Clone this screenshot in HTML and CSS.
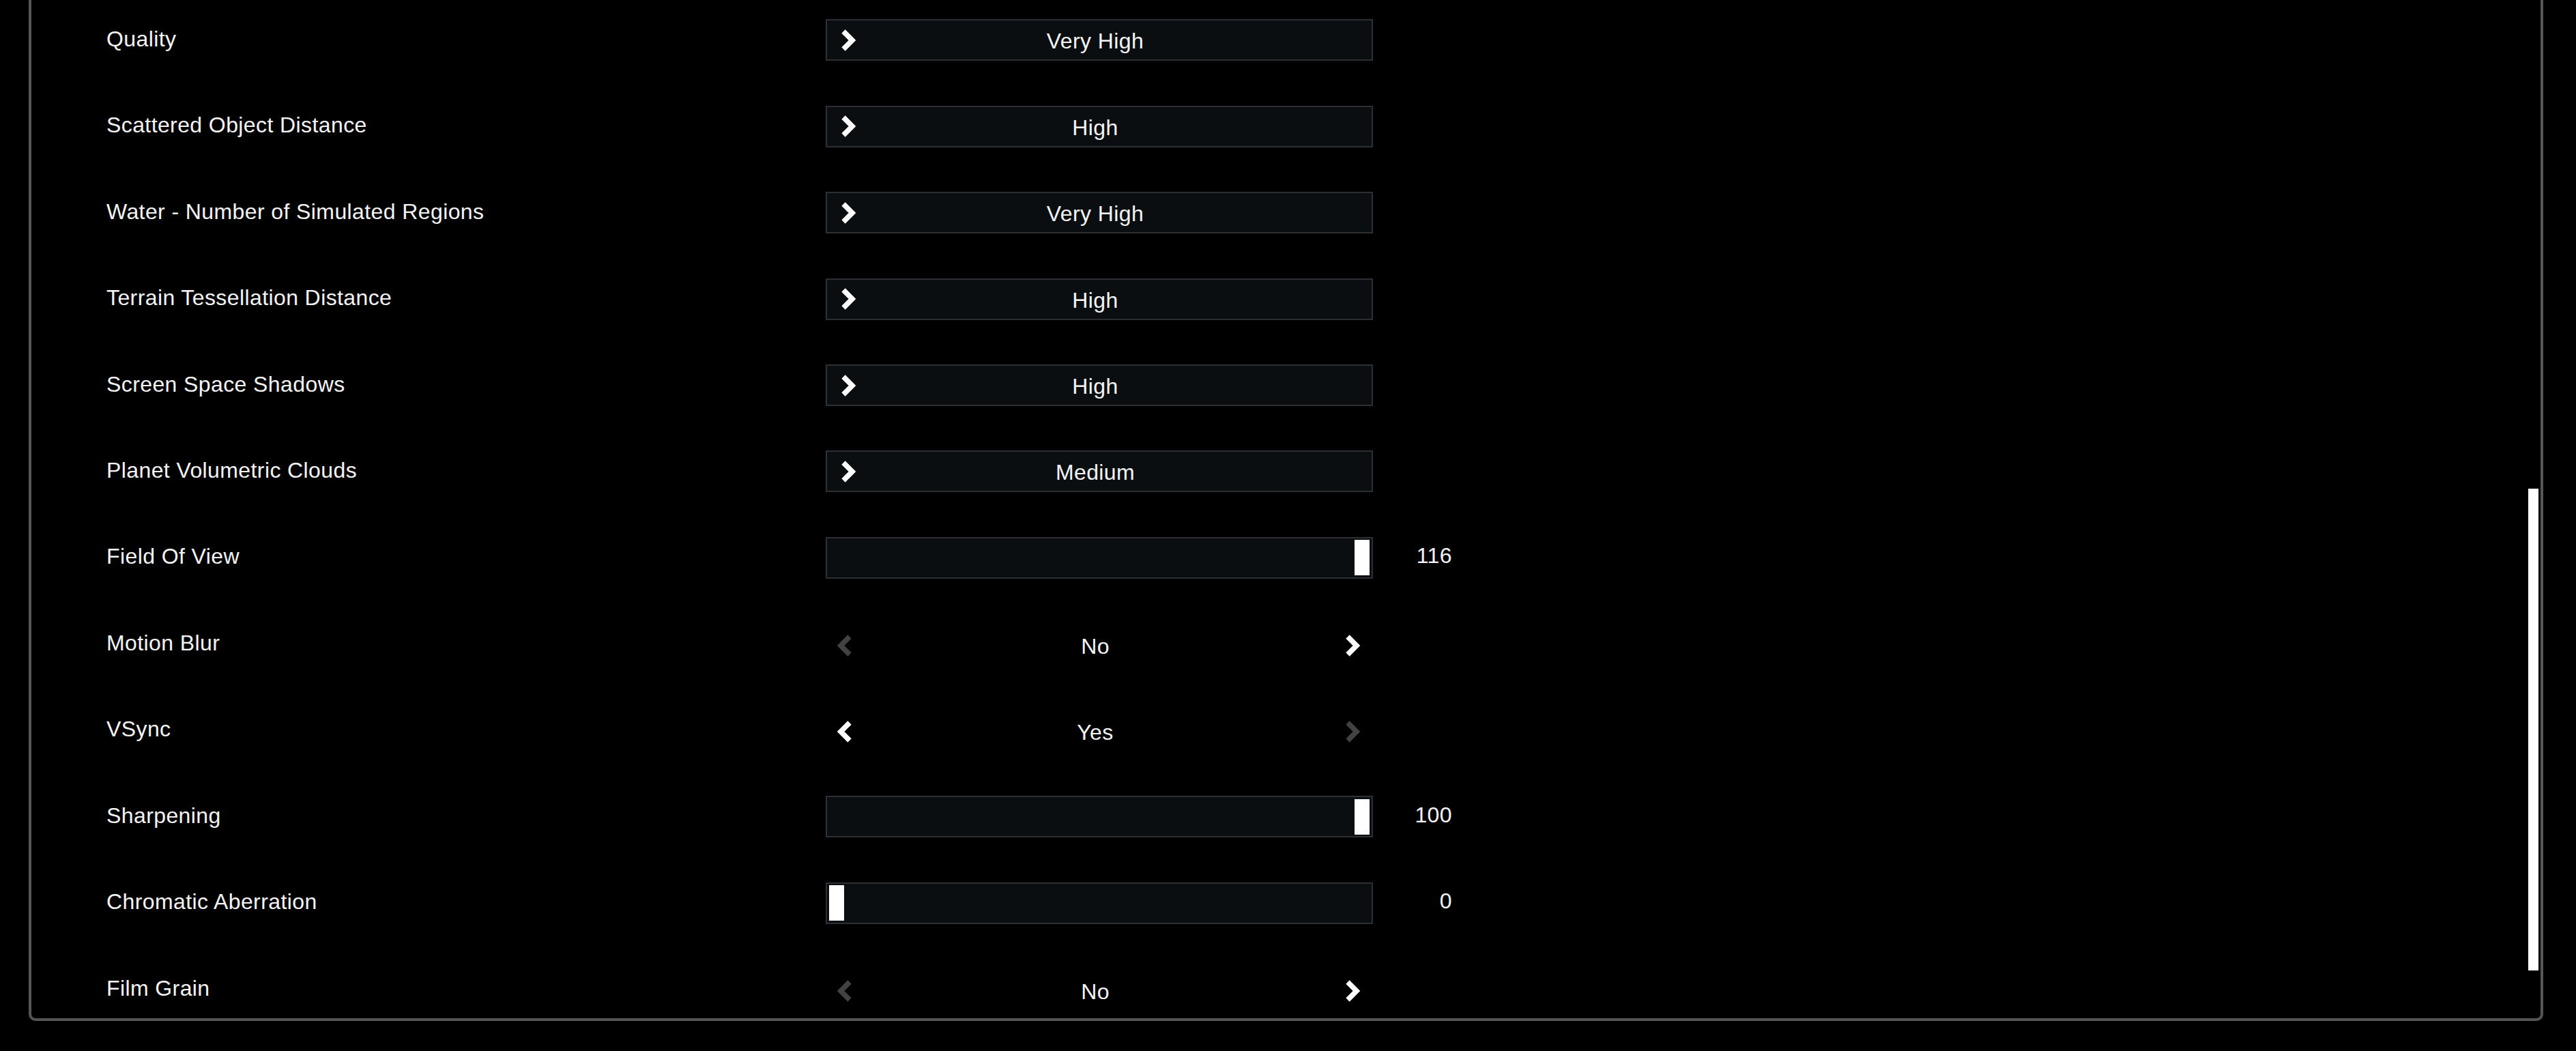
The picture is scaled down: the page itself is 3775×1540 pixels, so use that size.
FILE: index.html
```html
<!DOCTYPE html>
<html lang="en">
<head>
<meta charset="utf-8">
<title>Graphics Settings</title>
<link rel="stylesheet" href="styles.css">
</head>
<body>
<div class="panel">
  <div class="list">
    <div class="row">
      <div class="label">Quality</div>
      <div class="select"><svg class="chev" viewBox="0 0 24 34"><polyline points="5,4 18,17 5,30"/></svg><span class="sel-value">Very High</span></div>
    </div>
    <div class="row">
      <div class="label">Scattered Object Distance</div>
      <div class="select"><svg class="chev" viewBox="0 0 24 34"><polyline points="5,4 18,17 5,30"/></svg><span class="sel-value">High</span></div>
    </div>
    <div class="row">
      <div class="label">Water - Number of Simulated Regions</div>
      <div class="select"><svg class="chev" viewBox="0 0 24 34"><polyline points="5,4 18,17 5,30"/></svg><span class="sel-value">Very High</span></div>
    </div>
    <div class="row">
      <div class="label">Terrain Tessellation Distance</div>
      <div class="select"><svg class="chev" viewBox="0 0 24 34"><polyline points="5,4 18,17 5,30"/></svg><span class="sel-value">High</span></div>
    </div>
    <div class="row">
      <div class="label">Screen Space Shadows</div>
      <div class="select"><svg class="chev" viewBox="0 0 24 34"><polyline points="5,4 18,17 5,30"/></svg><span class="sel-value">High</span></div>
    </div>
    <div class="row">
      <div class="label">Planet Volumetric Clouds</div>
      <div class="select"><svg class="chev" viewBox="0 0 24 34"><polyline points="5,4 18,17 5,30"/></svg><span class="sel-value">Medium</span></div>
    </div>
    <div class="row">
      <div class="label">Field Of View</div>
      <div class="slider"><div class="thumb" style="margin-left: calc((100% - 22px) * 1)"></div></div>
      <div class="num">116</div>
    </div>
    <div class="row">
      <div class="label">Motion Blur</div>
      <div class="stepper"><svg class="chev dim" viewBox="0 0 24 34"><polyline points="19,4 6,17 19,30"/></svg><span class="step-value">No</span><svg class="chev" viewBox="0 0 24 34"><polyline points="5,4 18,17 5,30"/></svg></div>
    </div>
    <div class="row">
      <div class="label">VSync</div>
      <div class="stepper"><svg class="chev" viewBox="0 0 24 34"><polyline points="19,4 6,17 19,30"/></svg><span class="step-value">Yes</span><svg class="chev dim" viewBox="0 0 24 34"><polyline points="5,4 18,17 5,30"/></svg></div>
    </div>
    <div class="row">
      <div class="label">Sharpening</div>
      <div class="slider"><div class="thumb" style="margin-left: calc((100% - 22px) * 1)"></div></div>
      <div class="num">100</div>
    </div>
    <div class="row">
      <div class="label">Chromatic Aberration</div>
      <div class="slider"><div class="thumb" style="margin-left: calc((100% - 22px) * 0)"></div></div>
      <div class="num">0</div>
    </div>
    <div class="row">
      <div class="label">Film Grain</div>
      <div class="stepper"><svg class="chev dim" viewBox="0 0 24 34"><polyline points="19,4 6,17 19,30"/></svg><span class="step-value">No</span><svg class="chev" viewBox="0 0 24 34"><polyline points="5,4 18,17 5,30"/></svg></div>
    </div>
  </div>
  <div class="scroll"><div class="scroll-thumb"></div></div>
</div>
</body>
</html>
```
FILE: styles.css
```css
html, body {
  margin: 0;
  padding: 0;
  background: #000;
  height: 1540px;
  overflow: hidden;
}

body {
  font-family: "Liberation Sans", Arial, sans-serif;
  font-size: 32px;
  letter-spacing: 0.4px;
  color: #f4f4f4;
}

.panel {
  margin-left: 42px;
  width: 3685px;
  height: 1496px;
  box-sizing: border-box;
  border: 4px solid #555555;
  border-top: 0;
  border-radius: 0 0 10px 10px;
  display: flex;
  overflow: hidden;
}

.list {
  flex: 1;
  padding-left: 110px;
}

.row {
  height: 126.45px;
  box-sizing: border-box;
  padding-top: 28.3px;
  display: flex;
  align-items: flex-start;
}

.label {
  width: 1054px;
  height: 61px;
  box-sizing: border-box;
  padding-bottom: 3px;
  display: flex;
  align-items: center;
  white-space: nowrap;
}

.select {
  width: 802px;
  height: 61px;
  box-sizing: border-box;
  border: 2px solid #2c3034;
  background: #0b0e11;
  display: flex;
  align-items: center;
  padding-left: 19px;
}

.sel-value {
  flex: 1;
  text-align: center;
  padding-right: 55px;
  padding-top: 4px;
}

.chev {
  width: 24px;
  height: 34px;
  flex: none;
  display: block;
}

.chev polyline {
  fill: none;
  stroke: #ffffff;
  stroke-width: 7.5;
  stroke-linejoin: miter;
  stroke-linecap: butt;
}

.chev.dim polyline {
  stroke: #424242;
}

.stepper {
  width: 802px;
  height: 61px;
  box-sizing: border-box;
  display: flex;
  align-items: center;
  padding: 4px 18px 0 16px;
}

.step-value {
  flex: 1;
  text-align: center;
  padding-right: 10px;
  padding-top: 3px;
}

.slider {
  width: 802px;
  height: 61px;
  box-sizing: border-box;
  border: 2px solid #2c3034;
  background: #0b0e11;
  padding: 2px 3px;
  display: flex;
  align-items: center;
}

.thumb {
  width: 22px;
  height: 52px;
  background: #ffffff;
  flex: none;
}

.num {
  width: 116px;
  height: 61px;
  box-sizing: border-box;
  padding-bottom: 5px;
  display: flex;
  align-items: center;
  justify-content: flex-end;
}

.scroll {
  width: 15px;
  margin-right: 3px;
  flex: none;
  display: flex;
  flex-direction: column;
  justify-content: flex-end;
  padding-bottom: 70px;
  box-sizing: border-box;
}

.scroll-thumb {
  height: 706px;
  background: #ffffff;
}
```
